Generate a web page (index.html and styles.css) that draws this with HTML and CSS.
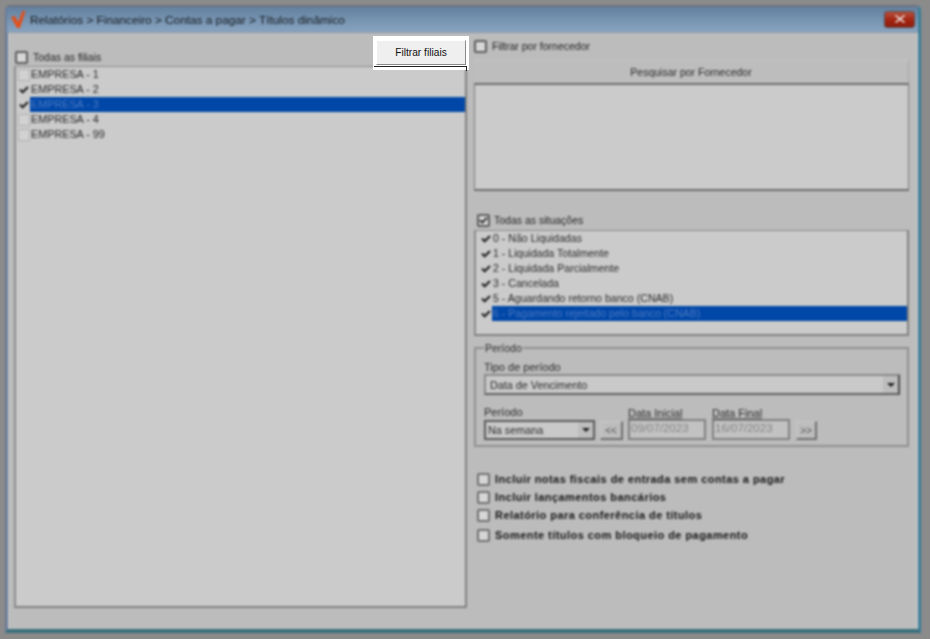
FILE: index.html
```html
<!DOCTYPE html>
<html lang="pt-BR">
<head>
<meta charset="utf-8">
<title>Títulos dinâmico</title>
<link rel="stylesheet" href="styles.css">
</head>
<body>
<div class="stage">
  <div class="window">
    <header class="titlebar">
      <svg class="logo" width="16" height="18" viewBox="0 0 16 18"><path d="M1 6 L5 5 L8 11 L12.5 0 L15.5 0 L10 17 L7 17 Z" fill="#e2501c"/></svg>
      <span class="title">Relatórios &gt; Financeiro &gt; Contas a pagar &gt; Títulos dinâmico</span>
      <span class="close"><svg width="10" height="8" viewBox="0 0 10 8"><path d="M1 0 L5 3 L9 0 L10 1 L6 4 L10 7 L9 8 L5 5 L1 8 L0 7 L4 4 L0 1 Z" fill="#eee"/></svg></span>
    </header>
    <main class="content">
      <section class="left">
        <label class="check-row all-branches"><span class="box"></span><span>Todas as filiais</span></label>
        <ul class="list branches">
          <li class="item"><span class="mini"></span><span class="item-text">EMPRESA - 1</span></li>
          <li class="item"><span class="mini on"><svg width="10" height="8" viewBox="0 0 11 9"><path d="M1 4 L4 7 L10 1" fill="none" stroke="#222" stroke-width="2.4"/></svg></span><span class="item-text">EMPRESA - 2</span></li>
          <li class="item selected"><span class="mini on"><svg width="10" height="8" viewBox="0 0 11 9"><path d="M1 4 L4 7 L10 1" fill="none" stroke="#222" stroke-width="2.4"/></svg></span><span class="item-text">EMPRESA - 3</span></li>
          <li class="item"><span class="mini"></span><span class="item-text">EMPRESA - 4</span></li>
          <li class="item"><span class="mini"></span><span class="item-text">EMPRESA - 99</span></li>
        </ul>
      </section>
      <section class="right">
        <label class="check-row supplier"><span class="box"></span><span>Filtrar por fornecedor</span></label>
        <div class="search-head">Pesquisar por Fornecedor</div>
        <div class="search-box"></div>
        <label class="check-row all-status"><span class="box"><svg width="10" height="9" viewBox="0 0 11 9"><path d="M1 4 L4 7 L10 1" fill="none" stroke="#333" stroke-width="2.4"/></svg></span><span>Todas as situações</span></label>
        <ul class="list status">
          <li class="item"><span class="mini on"><svg width="10" height="8" viewBox="0 0 11 9"><path d="M1 4 L4 7 L10 1" fill="none" stroke="#222" stroke-width="2.4"/></svg></span><span class="item-text">0 - Não Liquidadas</span></li>
          <li class="item"><span class="mini on"><svg width="10" height="8" viewBox="0 0 11 9"><path d="M1 4 L4 7 L10 1" fill="none" stroke="#222" stroke-width="2.4"/></svg></span><span class="item-text">1 - Liquidada Totalmente</span></li>
          <li class="item"><span class="mini on"><svg width="10" height="8" viewBox="0 0 11 9"><path d="M1 4 L4 7 L10 1" fill="none" stroke="#222" stroke-width="2.4"/></svg></span><span class="item-text">2 - Liquidada Parcialmente</span></li>
          <li class="item"><span class="mini on"><svg width="10" height="8" viewBox="0 0 11 9"><path d="M1 4 L4 7 L10 1" fill="none" stroke="#222" stroke-width="2.4"/></svg></span><span class="item-text">3 - Cancelada</span></li>
          <li class="item"><span class="mini on"><svg width="10" height="8" viewBox="0 0 11 9"><path d="M1 4 L4 7 L10 1" fill="none" stroke="#222" stroke-width="2.4"/></svg></span><span class="item-text">5 - Aguardando retorno banco (CNAB)</span></li>
          <li class="item selected"><span class="mini on"><svg width="10" height="8" viewBox="0 0 11 9"><path d="M1 4 L4 7 L10 1" fill="none" stroke="#222" stroke-width="2.4"/></svg></span><span class="item-text">6 - Pagamento rejeitado pelo banco (CNAB)</span></li>
        </ul>
        <fieldset class="period">
          <legend>Período</legend>
          <div class="field-label">Tipo de período</div>
          <div class="combo wide"><span class="combo-text">Data de Vencimento</span><span class="arrow"></span></div>
          <div class="period-row">
            <div class="field period-type">
              <div class="field-label">Período</div>
              <div class="combo small"><span class="combo-text">Na semana</span><span class="arrow"></span></div>
            </div>
            <span class="nav prev">&lt;&lt;</span>
            <div class="field date">
              <div class="field-label">Data Inicial</div>
              <div class="date-input">09/07/2023</div>
            </div>
            <div class="field date">
              <div class="field-label">Data Final</div>
              <div class="date-input">16/07/2023</div>
            </div>
            <span class="nav next">&gt;&gt;</span>
          </div>
        </fieldset>
        <div class="options">
          <label class="check-row bold"><span class="box"></span><span>Incluir notas fiscais de entrada sem contas a pagar</span></label>
          <label class="check-row bold"><span class="box"></span><span>Incluir lançamentos bancários</span></label>
          <label class="check-row bold"><span class="box"></span><span>Relatório para conferência de títulos</span></label>
          <label class="check-row bold last"><span class="box"></span><span>Somente títulos com bloqueio de pagamento</span></label>
        </div>
      </section>
    </main>
  </div>
  <div class="highlight">
    <button class="filter-btn" type="button">Filtrar filiais</button>
  </div>
</div>
</body>
</html>
```
FILE: styles.css
```css
* { box-sizing: border-box; }
html, body { margin: 0; height: 100%; }
body {
  background: #8b8b8b;
  font-family: "Liberation Sans", Arial, sans-serif;
  font-size: 10.5px;
  color: #1f1f1f;
  overflow: hidden;
}
.stage { position: relative; width: 930px; height: 639px; padding: 5px 9px 6px 5px; }
.window {
  height: 628px;
  display: flex;
  flex-direction: column;
  border-radius: 5px 5px 0 0;
  border-top: 2px solid #6d7480;
  border-right: 3px solid #3c7f98;
  border-bottom: 4px solid #3a6f7c;
  border-left: 3px solid #6b7c98;
  background: #bcbcbc;
  filter: blur(0.9px);
}
.titlebar {
  height: 26px;
  flex: none;
  display: flex;
  align-items: center;
  margin-left: -1px;
  padding: 1px 3px 0 3px;
  background: linear-gradient(#63819f, #88a4c0);
  border-bottom: 1px solid #8f9aa6;
}
.logo { flex: none; }
.title { margin-left: 4px; font-size: 11.8px; color: #161b20; flex: 1; }
.close {
  width: 31px; height: 17px;
  display: flex; align-items: center; justify-content: center;
  background: linear-gradient(#b5523f, #a32410 55%, #8d1d0f);
  border: 1px solid #5d4a4a;
  border-radius: 3px;
  margin-top: -2px;
}
.content {
  flex: 1;
  display: flex;
  gap: 7px;
  padding: 0 5px;
  border-left: 1px solid #d0d0d0;
  border-right: 1px solid #d0d0d0;
  background: #bcbcbc;
  min-height: 0;
}
.left { width: 453px; display: flex; flex-direction: column; }
.right { width: 435px; display: flex; flex-direction: column; }
.check-row { display: flex; align-items: center; height: 14px; }
.box {
  width: 13px; height: 13px;
  flex: none;
  border: 2px solid #5c5c5c;
  border-radius: 2px;
  background: #d6d6d6;
  display: flex; align-items: center; justify-content: center;
  margin-right: 5px;
}
.all-branches { margin-top: 17px; margin-left: 1px; }
.list {
  margin: 2px 0 0;
  padding: 0;
  list-style: none;
  background: #cbcbcb;
  border: 2px solid #8b8b8b;
  border-top-width: 1px;
  border-right-color: #808080;
  border-bottom-color: #808080;
}
.branches { flex: 1; margin-bottom: 21px; }
.item { height: 15px; display: flex; align-items: center; padding-left: 2px; }
.mini {
  width: 12px; height: 12px; flex: none;
  border: 1px solid #b2b2b2;
  background: #d2d2d2;
  display: flex; align-items: center; justify-content: center;
}
.mini.on { background: transparent; border-color: transparent; }
.item-text { flex: 1; padding-left: 1px; height: 15px; line-height: 14px; font-size: 10.8px; color: #2a2a2a; }
.selected .item-text { background: #0047a8; color: #4a78c0; }
.supplier { margin-top: 6px; }
.search-head {
  height: 23px;
  margin-top: 7px;
  display: flex; align-items: center; justify-content: center;
  background: #bdbdbd;
  border-top: 1px solid #c6c6c6;
  border-right: 1px solid #a5a5a5;
  color: #2a2a2a;
}
.search-box {
  height: 108px;
  background: #cbcbcb;
  border: 1px solid #7c7c7c;
  border-top: 2px solid #6d6d6d;
  border-bottom: 2px solid #6d6d6d;
}
.all-status { margin-top: 22px; margin-left: 3px; }
.all-status .box { margin-right: 4px; }
.status { height: 106px; margin-top: 3px; }
.status .item { padding-left: 4px; }
.status .item-text { padding-left: 1px; font-size: 10.6px; }
.period {
  margin: 6px 0 0;
  padding: 0 7px 0 8px;
  height: 105px;
  border: 2px solid #8f8f8f;
  min-width: 0;
}
.period legend { padding: 0 1px; line-height: 12px; color: #2a2a2a; }
.field-label { line-height: 14px; height: 14px; font-size: 11px; color: #2a2a2a; }
.period > .field-label { margin-top: 6px; }
.combo {
  display: flex; align-items: center;
  background: #c9c9c9;
  border: 2px solid #8a8a8a;
  border-right-color: #4a4a4a;
  border-bottom-color: #5f5f5f;
}
.combo.wide { height: 21px; margin-top: 0; }
.combo.small { height: 20px; width: 111px; margin-top: 1px; border-color: #5a5a5a; }
.combo-text { flex: 1; padding-left: 4px; font-size: 10.8px; color: #2a2a2a; }
.small .combo-text { padding-left: 2px; }
.arrow {
  width: 15px; height: 100%;
  background: #bdbdbd;
  display: flex; align-items: center; justify-content: center;
}
.arrow::after {
  content: "";
  border: 4px solid transparent;
  border-top: 4px solid #1d1d1d;
  border-bottom: 0;
}
.period-row { display: flex; align-items: flex-end; margin-top: 10px; }
.nav {
  width: 23px; height: 19px;
  display: flex; align-items: center; justify-content: center;
  font-size: 10px;
  background: #bdbdbd;
  color: #555;
  border-right: 2px solid #6f6f6f;
  border-bottom: 2px solid #6f6f6f;
  border-top: 1px solid #c8c8c8;
  border-left: 1px solid #c8c8c8;
}
.prev { margin-left: 5px; margin-right: 5px; }
.next { margin-left: 6px; width: 21px; }
.field.date { width: 78px; }
.field.date + .field.date { margin-left: 6px; }
.field.date .field-label { text-decoration: underline; text-decoration-color: #666; }
.date-input {
  height: 21px;
  margin-top: -1px;
  border: 2px solid #808080;
  background: #c2c2c2;
  color: #848484;
  font-size: 11.5px;
  line-height: 15px;
  padding-left: 1px;
}
.options { margin-top: 25px; margin-left: 3px; display: flex; flex-direction: column; gap: 4px; }
.bold { font-weight: 700; font-size: 11px; letter-spacing: 0.45px; color: #151515; }
.bold .box { border-color: #707070; }
.bold.last { margin-top: 2px; }
.highlight {
  position: absolute;
  left: 373px; top: 36px;
  width: 96px; height: 34px;
  background: #fff;
  padding: 4px 3px 0 3px;
}
.highlight::after {
  content: "";
  position: absolute;
  left: 1px; right: 2px; top: 30px; height: 4px;
  border-top: 1px solid #222;
  border-right: 1px solid #222;
}
.filter-btn {
  display: block;
  width: 90px; height: 25px;
  padding: 0;
  font: 10.2px "Liberation Sans", Arial, sans-serif;
  color: #111;
  background: #efefef;
  border: 0;
  border-top: 1px solid #fff;
  border-left: 1px solid #fff;
  border-right: 1px solid #8a8a8a;
  border-bottom: 1px solid #8a8a8a;
}
```
